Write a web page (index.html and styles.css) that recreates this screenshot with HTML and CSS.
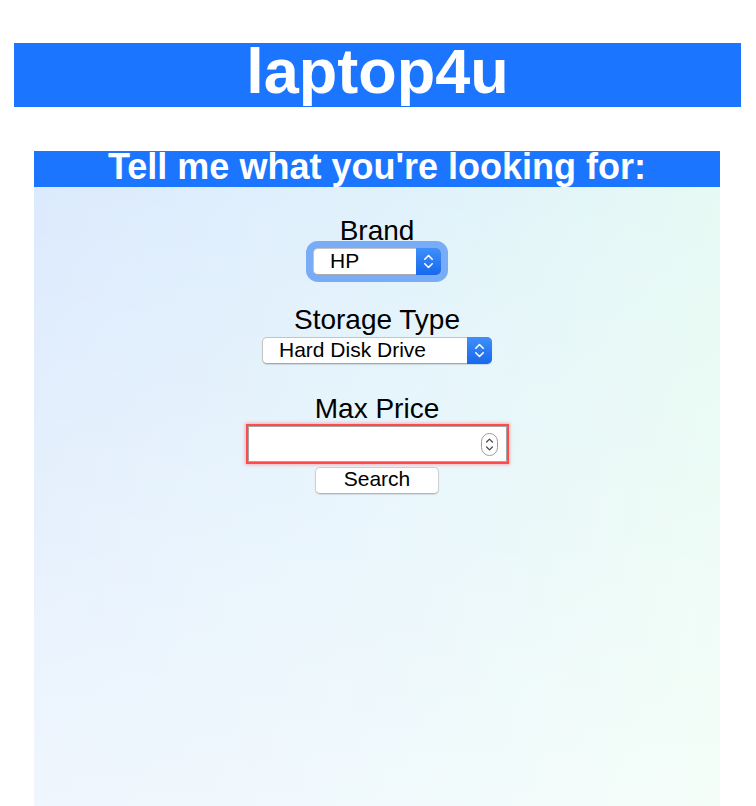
FILE: index.html
```html
<!DOCTYPE html>
<html lang="en">
<head>
<meta charset="utf-8">
<title>laptop4u</title>
<link rel="stylesheet" href="styles.css">
</head>
<body>
<h1 class="masthead">laptop4u</h1>
<main class="panel">
  <h2 class="panel-title">Tell me what you're looking for:</h2>
  <form class="search-form">
    <div class="field">
      <label class="field-label" for="brand">Brand</label>
      <div class="select-box select-box--brand is-focused">
        <select id="brand" class="select">
          <option>HP</option>
          <option>Dell</option>
          <option>Lenovo</option>
          <option>Apple</option>
        </select>
        <span class="select-arrows" aria-hidden="true">
          <svg width="25" height="27" viewBox="0 0 25 27"><path d="M8.8 11.2 L12.5 7.5 L16.2 11.2 M8.8 15.8 L12.5 19.5 L16.2 15.8" fill="none" stroke="#fff" stroke-width="1.6" stroke-linecap="round" stroke-linejoin="round"/></svg>
        </span>
      </div>
    </div>
    <div class="field">
      <label class="field-label" for="storage">Storage Type</label>
      <div class="select-box select-box--storage">
        <select id="storage" class="select">
          <option>Hard Disk Drive</option>
          <option>Solid State Drive</option>
        </select>
        <span class="select-arrows" aria-hidden="true">
          <svg width="25" height="27" viewBox="0 0 25 27"><path d="M8.8 11.2 L12.5 7.5 L16.2 11.2 M8.8 15.8 L12.5 19.5 L16.2 15.8" fill="none" stroke="#fff" stroke-width="1.6" stroke-linecap="round" stroke-linejoin="round"/></svg>
        </span>
      </div>
    </div>
    <div class="field">
      <label class="field-label" for="price">Max Price</label>
      <div class="price-box">
        <input id="price" class="price-input" type="number">
        <span class="spinner" aria-hidden="true">
          <svg width="17" height="23" viewBox="0 0 17 23"><rect x="0.5" y="0.5" width="16" height="22" rx="8" fill="#fff" stroke="#9c9c9c"/><path d="M5.6 9 L8.5 6.1 L11.4 9 M5.6 14 L8.5 16.9 L11.4 14" fill="none" stroke="#4a4a4a" stroke-width="1.3" stroke-linecap="round" stroke-linejoin="round"/></svg>
        </span>
      </div>
      <button class="search-btn" type="submit">Search</button>
    </div>
  </form>
</main>
</body>
</html>
```

FILE: styles.css
```css
html, body {
  margin: 0;
  padding: 0;
  background: #ffffff;
}

body {
  font-family: "Liberation Sans", Arial, Helvetica, sans-serif;
  color: #000;
}

.masthead {
  margin: 43px 15px 0 14px;
  padding: 0 0 8px;
  background: #1c75fe;
  color: #ffffff;
  font-size: 63px;
  line-height: 56px;
  font-weight: 700;
  text-align: center;
}

.panel {
  margin: 44px 36px 0 34px;
  height: 655px;
  box-sizing: border-box;
  display: flex;
  flex-direction: column;
  background:
    linear-gradient(to bottom, rgba(255,255,255,0) 0%, rgba(255,255,255,0.55) 100%),
    linear-gradient(100deg, #dbe9fd 0%, #e0f2fb 50%, #e7fcf1 100%);
}

.panel-title {
  margin: 0;
  padding: 0 0 4px;
  background: #1c75fe;
  color: #ffffff;
  font-size: 36px;
  line-height: 32px;
  font-weight: 700;
  text-align: center;
}

.search-form {
  display: flex;
  flex-direction: column;
  align-items: center;
  gap: 27px;
  padding-top: 26px;
}

.field {
  display: flex;
  flex-direction: column;
  align-items: center;
}

.field-label {
  font-size: 28px;
  line-height: 32px;
  padding-top: 2px;
  margin-bottom: 1px;
}

.select-box {
  display: flex;
  height: 27px;
  box-sizing: border-box;
  background: #ffffff;
  border: 1px solid #c4c4c4;
  border-bottom-color: #a9a9a9;
  border-radius: 5px;
  box-shadow: 0 1px 1px rgba(0,0,0,0.12);
}

.select-box--brand { width: 128px; }
.select-box--storage { width: 230px; }

.select-box.is-focused {
  box-shadow: 0 0 0 7px #78acf6;
  border-radius: 5px;
}

.select {
  flex: 1;
  min-width: 0;
  -webkit-appearance: none;
  appearance: none;
  border: none;
  background: transparent;
  margin: 0;
  padding: 0 0 1px 16px;
  font-family: "Liberation Sans", Arial, sans-serif;
  font-size: 21px;
  line-height: 24px;
  color: #000;
  outline: none;
}

.select-arrows {
  display: flex;
  align-items: center;
  justify-content: center;
  width: 25px;
  margin: -1px -1px -1px 0;
  background: linear-gradient(to bottom, #3f8ffa, #1768ee);
  border-radius: 0 5px 5px 0;
}

.select-arrows svg { display: block; }

.price-box {
  display: flex;
  align-items: center;
  width: 259px;
  height: 36px;
  box-sizing: border-box;
  background: #ffffff;
  border: 1px solid #a3a3a3;
  box-shadow: 0 0 0 2px #ff4b4b, 0 0 3px 3px rgba(255,60,60,0.35);
}

.price-input {
  flex: 1;
  min-width: 0;
  height: 100%;
  border: none;
  outline: none;
  background: transparent;
  padding: 0 6px;
  font-family: "Liberation Sans", Arial, sans-serif;
  font-size: 21px;
  -moz-appearance: textfield;
  appearance: textfield;
}

.price-input::-webkit-inner-spin-button,
.price-input::-webkit-outer-spin-button {
  -webkit-appearance: none;
  margin: 0;
}

.spinner {
  display: flex;
  margin-right: 8px;
}

.spinner svg { display: block; }

.search-btn {
  margin-top: 5px;
  width: 124px;
  height: 27px;
  box-sizing: border-box;
  padding: 0 0 4px;
  background: #ffffff;
  border: 1px solid #cfcfcf;
  border-bottom-color: #b5b5b5;
  border-radius: 5px;
  box-shadow: 0 1px 1px rgba(0,0,0,0.1);
  font-family: "Liberation Sans", Arial, sans-serif;
  font-size: 21px;
  line-height: 21px;
  color: #000;
}
```
